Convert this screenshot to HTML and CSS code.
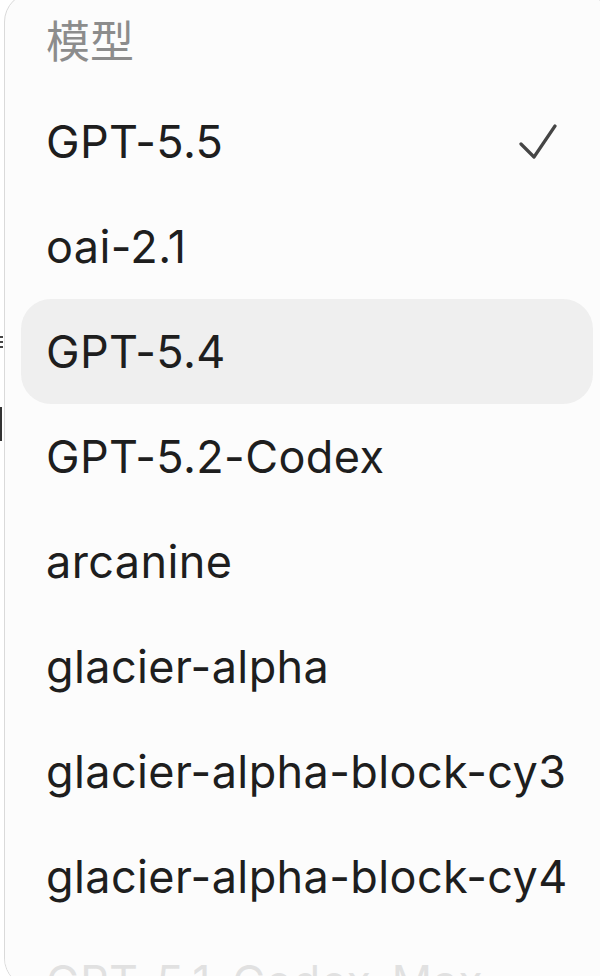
FILE: index.html
```html
<!DOCTYPE html>
<html lang="zh-CN">
<head>
    <meta charset="UTF-8">
    <meta name="viewport" content="width=device-width, initial-scale=1.0">
    <title>模型</title>
    <link rel="stylesheet" href="styles.css">
</head>
<body>

    <div class="behind">
        <span class="peek peek-lines"></span>
        <span class="peek peek-bar"></span>
    </div>

    <div class="menu">
        <div class="menu-title">模型</div>
        <div class="menu-item">
            <span>GPT-5.5</span>
            <svg class="check" width="38" height="36" viewBox="0 0 38 36">
                <path d="M2 20 L15 33 L36 2" fill="none" stroke="#454545" stroke-width="3.2" stroke-linecap="round" stroke-linejoin="round"/>
            </svg>
        </div>
        <div class="menu-item">oai-2.1</div>
        <div class="menu-item hover">GPT-5.4</div>
        <div class="menu-item">GPT-5.2-Codex</div>
        <div class="menu-item">arcanine</div>
        <div class="menu-item">glacier-alpha</div>
        <div class="menu-item">glacier-alpha-block-cy3</div>
        <div class="menu-item">glacier-alpha-block-cy4</div>
        <div class="menu-item">GPT-5.1-Codex-Max</div>
    </div>

</body>
</html>
```

FILE: styles.css
```css
body {
    margin: 0;
    background: #ffffff;
    color: #1e1e1e;
    font-family: Inter, "Noto Sans CJK SC", sans-serif;
    overflow: hidden;
    height: 976px;
    position: relative;
}
/* bits of the page under the popup */
.behind {
    position: absolute;
    left: 0;
    top: 0;
}
.peek {
    position: absolute;
    left: 0;
    background: #333;
}
.peek-lines {
    top: 336px;
    width: 3px;
    height: 14px;
    background: repeating-linear-gradient(to bottom, #444 0 2px, transparent 2px 5px);
}
.peek-bar {
    top: 407px;
    width: 2px;
    height: 34px;
}
.menu {
    position: relative;
    margin: -8px -10px 0 4px;
    height: 996px;
    box-sizing: border-box;
    padding: 0 16px;
    background: #fcfcfc;
    border: 1px solid #dadada;
    border-radius: 30px;
    overflow: hidden;
}
.menu::after {
    content: "";
    position: absolute;
    left: 0;
    right: 0;
    bottom: 0;
    height: 70px;
    background: linear-gradient(to bottom, rgba(252, 252, 252, 0.6), rgba(252, 252, 252, 0.88) 50%);
}
.menu-title {
    height: 96px;
    box-sizing: border-box;
    padding: 21px 0 0 25px;
    font-family: "Noto Sans CJK SC", sans-serif;
    font-size: 44px;
    line-height: 50px;
    color: #8c8c8c;
}
.menu-item {
    display: flex;
    align-items: center;
    justify-content: space-between;
    height: 105px;
    padding: 0 36px 0 25px;
    border-radius: 30px;
    font-size: 45px;
    letter-spacing: 0.4px;
    white-space: nowrap;
}
.menu-item.hover {
    background: #efefef;
}
.check {
    display: block;
}
```
